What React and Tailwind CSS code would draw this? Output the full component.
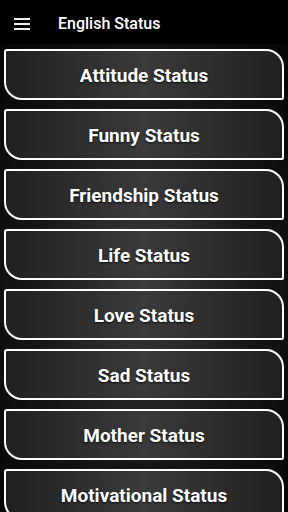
const items = [
  'Attitude Status',
  'Funny Status',
  'Friendship Status',
  'Life Status',
  'Love Status',
  'Sad Status',
  'Mother Status',
  'Motivational Status',
];

export default function App() {
  return (
    <div
      className="w-[288px] h-[512px] overflow-hidden bg-black flex flex-col"
      style={{ fontFamily: 'Roboto, "Liberation Sans", sans-serif' }}
    >
      {/* Toolbar */}
      <div className="h-[44px] shrink-0 flex items-center bg-black pt-[3px]">
        <div className="w-[58px] flex justify-center pr-[14px]">
          <svg width="16" height="12" viewBox="0 0 16 12">
            <rect x="0" y="0" width="16" height="2" fill="#eee" />
            <rect x="0" y="5" width="16" height="2" fill="#eee" />
            <rect x="0" y="10" width="16" height="2" fill="#eee" />
          </svg>
        </div>
        <span className="text-white text-[16px] font-medium">English Status</span>
      </div>

      {/* List */}
      <div className="flex-1 flex flex-col gap-[9px] px-[4px] pt-[5px] bg-[radial-gradient(ellipse_at_50%_50%,#3c3c3c_0%,#161616_55%,#050505_100%)]">
        {items.map((label) => (
          <button
            key={label}
            className="h-[51px] shrink-0 w-full flex items-center justify-center pt-[3px] border-2 border-white rounded-tl-[3px] rounded-tr-[18px] rounded-bl-[18px] rounded-br-[2px] bg-[linear-gradient(90deg,#202020_0%,#3a3a3a_50%,#202020_100%)]"
          >
            <span className="text-white text-[19px] font-bold [text-shadow:0_1px_2px_rgba(0,0,0,0.8)]">
              {label}
            </span>
          </button>
        ))}
      </div>
    </div>
  );
}
